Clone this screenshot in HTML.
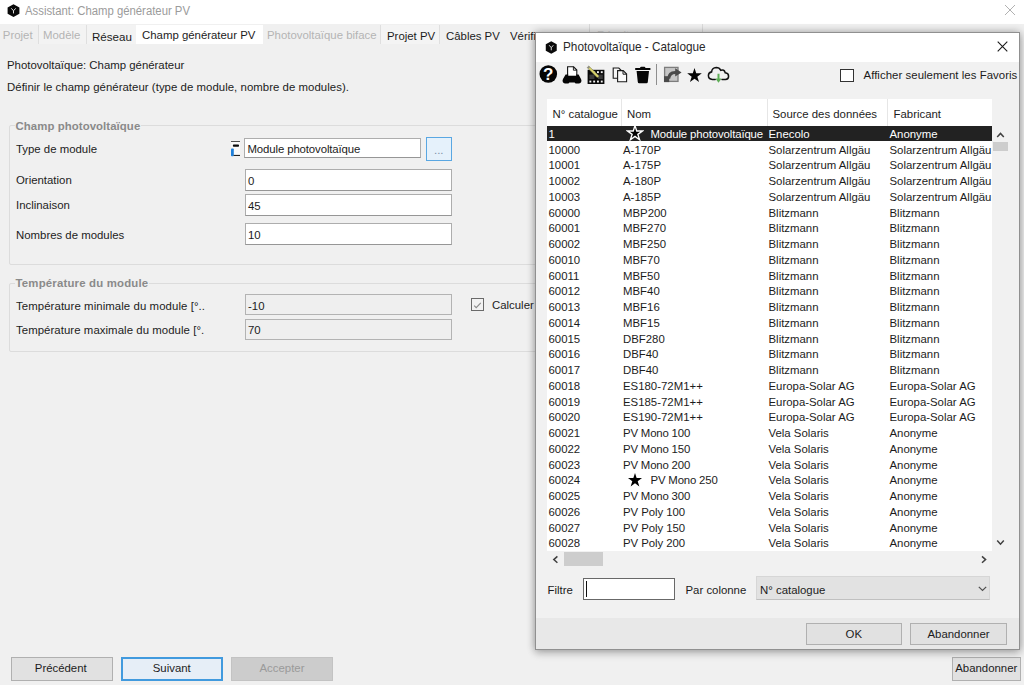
<!DOCTYPE html>
<html lang="fr">
<head>
<meta charset="utf-8">
<title>Assistant: Champ générateur PV</title>
<style>
*{box-sizing:border-box;margin:0;padding:0}
html,body{width:1024px;height:685px;overflow:hidden;background:#f0f0f0}
body{position:relative;font-family:"Liberation Sans",sans-serif;font-size:11.4px;color:#1c1c1c;line-height:14px;white-space:nowrap}
.abs{position:absolute}
.t{position:absolute;white-space:nowrap;line-height:14px;height:14px}
#titlebar{position:absolute;left:0;top:0;width:1024px;height:24.5px;background:#fff}
#tabs{position:absolute;left:0;top:24.4px;width:1024px;height:20px;background:#f0f0f0}
.tab{position:absolute;top:24.5px;height:19.5px;border-left:1px solid #dfdfdf}
.dis{color:#b4b4b4}
.grp{position:absolute;border:1px solid #dcdcdc;border-radius:2px}
.gt{position:absolute;font-weight:bold;color:#8a8a8a;background:#f0f0f0;padding:0 1px;line-height:14px}
.inp{position:absolute;background:#fff;border:1px solid #adadad;border-bottom-color:#969696;font-size:11.4px;line-height:14px;padding-left:2.5px}
.inp.d{background:#efefef;border-color:#b3b3b3}
.btn{position:absolute;background:#e1e1e1;border:1px solid #b0b0b0;text-align:center;line-height:21px;height:23px}
.row{position:absolute;left:547px;width:445px;height:15.75px;line-height:15.75px}
.row span{top:0.75px}
.row.sel{background:#222;color:#fff;height:15.4px}
.rstar{position:absolute}
#dlg{position:absolute;left:535px;top:32px;width:484.5px;height:618px;background:#f1f1f1;border:1px solid #909090;box-shadow:0 0 8px rgba(0,0,0,.32),0 4px 8px rgba(0,0,0,.14)}
</style>
</head>
<body>
<!-- main window -->
<div id="titlebar"></div>
<svg class="abs" style="left:6.5px;top:3.5px" width="13" height="13.2" viewBox="0 0 13 14" preserveAspectRatio="none"><path d="M6.5 0.3 L12.4 3.6 V10.4 L6.5 13.7 L0.6 10.4 V3.6 Z" fill="#0a0a0a"/><path d="M4.3 4.6 L6.5 7.2 L8.7 4.6 M6.5 7.2 V10" stroke="#e8e8e8" stroke-width="1" fill="none"/></svg>
<div class="t" style="left:25px;top:3.8px;font-size:12px;color:#9b9b9b;transform-origin:0 0;transform:scaleX(.944)">Assistant: Champ générateur PV</div>
<svg class="abs" style="left:1004px;top:3.8px" width="12" height="12" viewBox="0 0 12 12"><path d="M1 1 L11 11 M11 1 L1 11" stroke="#a8a8a8" stroke-width="0.9" fill="none"/></svg>

<div id="tabs"></div>
<div class="tab" style="left:38px;width:48px;background:#f3f3f3"></div>
<div class="tab" style="left:85.5px;width:50px;background:#f3f3f3"></div>
<div class="tab" style="left:135.5px;width:127px;background:#fff;border-left:none"></div>
<div class="tab" style="left:380px;width:60px;background:#f4f4f4;border-right:1px solid #dfdfdf"></div>
<div class="t dis" style="left:2.8px;top:28px">Projet</div>
<div class="t dis" style="left:43px;top:28px">Modèle</div>
<div class="t" style="left:92px;top:30px;font-size:11.6px">Réseau</div>
<div class="t" style="left:142px;top:27.5px">Champ générateur PV</div>
<div class="t dis" style="left:267px;top:28px">Photovoltaïque biface</div>
<div class="t" style="left:387px;top:29px">Projet PV</div>
<div class="t" style="left:446px;top:29px">Câbles PV</div>
<div class="t" style="left:510px;top:29px">Vérification</div>
<div class="t dis" style="left:597px;top:28px;color:#d0d0d0">Résultats</div>
<div class="abs" style="left:589px;top:24px;width:1px;height:8px;background:#dadada"></div>
<div class="abs" style="left:702px;top:24px;width:1px;height:8px;background:#dadada"></div>

<div class="t" style="left:7px;top:58px">Photovoltaïque: Champ générateur</div>
<div class="t" style="left:7px;top:79.5px;letter-spacing:0.04px">Définir le champ générateur (type de module, nombre de modules).</div>

<div class="grp" style="left:9px;top:125px;width:1006px;height:140px"></div>
<div class="gt" style="left:14.5px;top:119px;letter-spacing:0.07px">Champ photovoltaïque</div>
<div class="t" style="left:16px;top:142px">Type de module</div>
<div class="t" style="left:16px;top:173px">Orientation</div>
<div class="t" style="left:16px;top:198px">Inclinaison</div>
<div class="t" style="left:16px;top:227.5px">Nombres de modules</div>
<svg class="abs" style="left:230px;top:141px" width="11" height="16" viewBox="0 0 11 16"><rect x="1" y="0.6" width="9" height="14.3" fill="#f9f9f9"/><rect x="1" y="0" width="9" height="1" fill="#505050"/><rect x="2.9" y="3.5" width="6.1" height="2.2" rx="0.8" fill="#0a0a0a"/><rect x="1" y="7.4" width="2.8" height="7.9" rx="0.8" fill="#1f80da"/><rect x="3.6" y="13.9" width="6.4" height="1.1" fill="#222"/></svg>
<div class="inp" style="left:244px;top:138px;width:177px;height:19.5px;padding-top:2.5px;letter-spacing:-0.12px">Module photovoltaïque</div>
<div class="abs" style="left:426px;top:137px;width:25.5px;height:23.5px;background:#e5f1fb;border:1px solid #5aa7e2;text-align:center;line-height:24px;color:#7b8ea6">...</div>
<div class="inp" style="left:244.5px;top:169px;width:207px;height:22px;padding-top:4px">0</div>
<div class="inp" style="left:244.5px;top:194px;width:207px;height:22px;padding-top:4px">45</div>
<div class="inp" style="left:244.5px;top:223px;width:207px;height:22px;padding-top:4px">10</div>

<div class="grp" style="left:9px;top:282.5px;width:1006px;height:69px"></div>
<div class="gt" style="left:14.5px;top:275.5px;letter-spacing:0.19px">Température du module</div>
<div class="t" style="left:16px;top:298.5px;letter-spacing:0.08px">Température minimale du module [°..</div>
<div class="t" style="left:16px;top:322.5px;letter-spacing:0.06px">Température maximale du module [°.</div>
<div class="inp d" style="left:244.5px;top:294px;width:207px;height:21px;padding-top:3.5px">-10</div>
<div class="inp d" style="left:244.5px;top:318.5px;width:207px;height:21.5px;padding-top:3.5px">70</div>
<div class="abs" style="left:471px;top:298px;width:13px;height:13px;background:#f2f2f2;border:1px solid #6a6a6a"></div>
<svg class="abs" style="left:472px;top:299px" width="11" height="11" viewBox="0 0 11 11"><path d="M2.2 6.6 L4.2 8.6 L8.8 3.8" stroke="#8a8a8a" stroke-width="1.1" fill="none"/></svg>
<div class="t" style="left:492px;top:297.5px">Calculer</div>

<div class="btn" style="left:11px;top:657px;width:101.5px;height:23.5px;text-indent:-2px">Précédent</div>
<div class="btn" style="left:121px;top:657px;width:101.5px;height:23.5px;background:#e6eef7;border:2px solid #419ade;line-height:19.5px">Suivant</div>
<div class="btn" style="left:231px;top:657px;width:102px;height:23.5px;background:#cccccc;border-color:#c3c3c3;color:#9a9a9a">Accepter</div>
<div class="btn" style="left:952px;top:657px;width:68.5px;height:23.5px">Abandonner</div>

<!-- dialog -->
<div id="dlg"></div>
<div class="abs" style="left:536px;top:33px;width:482.5px;height:28.5px;background:#fff"></div>
<svg class="abs" style="left:544.5px;top:40.5px" width="12.5" height="13" viewBox="0 0 13 14"><path d="M6.5 0.3 L12.4 3.6 V10.4 L6.5 13.7 L0.6 10.4 V3.6 Z" fill="#0a0a0a"/><path d="M4.3 4.6 L6.5 7.2 L8.7 4.6 M6.5 7.2 V10" stroke="#e8e8e8" stroke-width="1" fill="none"/></svg>
<div class="t" style="left:563px;top:40.3px;font-size:12.4px;color:#2a2a2a;transform-origin:0 0;transform:scaleX(.95)">Photovoltaïque - Catalogue</div>
<svg class="abs" style="left:997px;top:41.2px" width="11" height="11" viewBox="0 0 11 11"><path d="M0.7 0.7 L10.3 10.3 M10.3 0.7 L0.7 10.3" stroke="#1a1a1a" stroke-width="1.1" fill="none"/></svg>

<!-- toolbar icons -->
<svg class="abs" style="left:539px;top:65px" width="19" height="19" viewBox="0 0 19 19"><circle cx="9.3" cy="9" r="8.8" fill="#050505"/><text x="9.3" y="14.9" text-anchor="middle" font-family="Liberation Sans, sans-serif" font-weight="bold" font-size="17" fill="#fff">?</text></svg>
<svg class="abs" style="left:562px;top:65.5px" width="20" height="18" viewBox="0 0 20 18"><path d="M5.6 9.5 V0.8 H11.6 L14.8 4 V9.5" fill="#fff" stroke="#111" stroke-width="1.1"/><path d="M11.4 0.8 V4.2 H14.8" fill="none" stroke="#111" stroke-width="0.9"/><path d="M3.6 8.6 H6.2 V9.8 H14.2 V8.6 H16.6 L19 13 Q19.8 14.6 19.2 16 Q18.6 17.4 17 17.4 H13.6 L12.6 16.4 H7.4 L6.4 17.4 H3 Q1.4 17.4 0.8 16 Q0.2 14.6 1 13 Z" fill="#050505"/></svg>
<svg class="abs" style="left:586px;top:64.5px" width="20" height="20" viewBox="0 0 20 20"><rect x="1.6" y="4.8" width="16.8" height="14.2" fill="#0a0a0a"/><g fill="#f4f4f4"><rect x="7.2" y="6.2" width="1.9" height="1.9"/><rect x="11" y="6.2" width="1.9" height="1.9"/><rect x="14.8" y="6.2" width="1.9" height="1.9"/><rect x="3.4" y="15.6" width="1.9" height="1.9"/><rect x="7.2" y="15.6" width="1.9" height="1.9"/><rect x="11" y="15.6" width="1.9" height="1.9"/><rect x="14.8" y="15.6" width="1.9" height="1.9"/><rect x="3.4" y="9.6" width="5" height="4.4" fill="#3a3a3a"/><rect x="12" y="9.6" width="4.8" height="4.4" fill="#3a3a3a"/></g><path d="M1.2 2.6 L2.8 1 L12.6 10.6 L13 12.8 L10.8 12.3 Z" fill="#d9d36a" stroke="#6b6b4a" stroke-width="0.5"/><path d="M1.2 2.6 L2.8 1 L4 2.2 L2.4 3.8 Z" fill="#8a8a8a"/><path d="M11.9 12.55 L13 12.8 L12.8 11.7 Z" fill="#222"/></svg>
<svg class="abs" style="left:612px;top:66.5px" width="16" height="16" viewBox="0 0 16 16"><path d="M1.2 1 H6.8 L9.6 3.8 V11.2 H1.2 Z" fill="#f6f6f6" stroke="#1a1a1a" stroke-width="1.1"/><path d="M5.6 3.6 H11.2 L14.6 7 V14.8 H5.6 Z" fill="#fafafa" stroke="#1a1a1a" stroke-width="1.1"/><path d="M11 3.8 V7.2 H14.4" fill="none" stroke="#1a1a1a" stroke-width="1"/></svg>
<svg class="abs" style="left:634px;top:65.5px" width="18" height="18" viewBox="0 0 18 18"><path d="M6.6 0.9 H10.8 V2 H6.6 Z M1.2 2 H16.4 V4 H1.2 Z" fill="#050505"/><path d="M6.2 1.9 Q6.2 0.8 7.4 0.8 H10.2 Q11.4 0.8 11.4 1.9 Z" fill="#050505"/><path d="M2.6 5 H15 L13.8 16 Q13.7 17.2 12.5 17.2 H5.1 Q3.9 17.2 3.8 16 Z" fill="#050505"/></svg>
<div class="abs" style="left:656px;top:64px;width:1px;height:20.5px;background:#8e8e8e"></div>
<svg class="abs" style="left:663px;top:65.5px" width="20" height="18" viewBox="0 0 20 18"><rect x="1.6" y="1.4" width="13.4" height="14" fill="#c6c6c6" stroke="#7d7d7d" stroke-width="1.3"/><rect x="1" y="10.2" width="5.2" height="5.9" fill="#4a4a4a"/><path d="M4.2 12.8 Q4.4 5.2 12.2 5 V2.2 L18.6 6.4 L12.2 10.6 V8 Q7.8 8 7.2 12.8 Z" fill="#4a4a4a"/></svg>
<svg class="abs" style="left:687px;top:68px" width="15" height="14" viewBox="0 0 14 13.4"><path d="M7 0 L8.65 5.1 L14 5.1 L9.7 8.3 L11.35 13.4 L7 10.2 L2.65 13.4 L4.3 8.3 L0 5.1 L5.35 5.1 Z" fill="#050505"/></svg>
<svg class="abs" style="left:707px;top:66px" width="23" height="18.5" viewBox="0 0 23 17" preserveAspectRatio="none"><path d="M8.2 12.4 H5.4 Q1.4 12.2 1.4 8.8 Q1.4 6 4.6 5.4 Q5 1.6 9.2 1.4 Q12.4 1.4 13.8 4 Q17.2 2.8 18.2 6.2 Q21.6 6.6 21.6 9.4 Q21.6 12.2 18.4 12.4 H15" fill="none" stroke="#111" stroke-width="1.5" stroke-linecap="round"/><path d="M10.5 7.2 H12.5 V11.4 H14.6 L11.5 15.4 L8.4 11.4 H10.5 Z" fill="#5fae57"/></svg>


<div class="abs" style="left:840px;top:68.5px;width:13.5px;height:13.5px;background:#fff;border:1px solid #333"></div>
<div class="t" style="left:863.5px;top:68px;letter-spacing:0.05px">Afficher seulement les Favoris</div>

<!-- table -->
<div class="abs" style="left:547px;top:99px;width:445px;height:452px;background:#fff"></div>
<div class="abs" style="left:621px;top:99px;width:1px;height:27px;background:#e6e6e6"></div>
<div class="abs" style="left:766.5px;top:99px;width:1px;height:27px;background:#e6e6e6"></div>
<div class="abs" style="left:886.5px;top:99px;width:1px;height:27px;background:#e6e6e6"></div>
<div class="t" style="left:552.5px;top:107px">N° catalogue</div>
<div class="t" style="left:627px;top:107px">Nom</div>
<div class="t" style="left:772.5px;top:107px">Source des données</div>
<div class="t" style="left:893.5px;top:107px">Fabricant</div>
<div class="row sel" style="top:126.10px"><span style="position:absolute;left:1.5px">1</span><svg class="rstar" viewBox="-1.5 -1.5 17 17" width="18" height="18" style="left:79px;top:-2px"><path d="M7 0 L8.65 5.1 L14 5.1 L9.7 8.3 L11.35 13.4 L7 10.2 L2.65 13.4 L4.3 8.3 L0 5.1 L5.35 5.1 Z" fill="#000" stroke="#fff" stroke-width="1.3"/></svg><span style="position:absolute;left:103.5px;letter-spacing:-0.13px">Module photovoltaïque</span><span style="position:absolute;left:221.5px">Enecolo</span><span style="position:absolute;left:342.5px">Anonyme</span></div>
<div class="row" style="top:141.85px"><span style="position:absolute;left:1.5px">10000</span><span style="position:absolute;left:76px">A-170P</span><span style="position:absolute;left:221.5px">Solarzentrum Allgäu</span><span style="position:absolute;left:342.5px">Solarzentrum Allgäu</span></div>
<div class="row" style="top:157.60px"><span style="position:absolute;left:1.5px">10001</span><span style="position:absolute;left:76px">A-175P</span><span style="position:absolute;left:221.5px">Solarzentrum Allgäu</span><span style="position:absolute;left:342.5px">Solarzentrum Allgäu</span></div>
<div class="row" style="top:173.35px"><span style="position:absolute;left:1.5px">10002</span><span style="position:absolute;left:76px">A-180P</span><span style="position:absolute;left:221.5px">Solarzentrum Allgäu</span><span style="position:absolute;left:342.5px">Solarzentrum Allgäu</span></div>
<div class="row" style="top:189.10px"><span style="position:absolute;left:1.5px">10003</span><span style="position:absolute;left:76px">A-185P</span><span style="position:absolute;left:221.5px">Solarzentrum Allgäu</span><span style="position:absolute;left:342.5px">Solarzentrum Allgäu</span></div>
<div class="row" style="top:204.85px"><span style="position:absolute;left:1.5px">60000</span><span style="position:absolute;left:76px">MBP200</span><span style="position:absolute;left:221.5px">Blitzmann</span><span style="position:absolute;left:342.5px">Blitzmann</span></div>
<div class="row" style="top:220.60px"><span style="position:absolute;left:1.5px">60001</span><span style="position:absolute;left:76px">MBF270</span><span style="position:absolute;left:221.5px">Blitzmann</span><span style="position:absolute;left:342.5px">Blitzmann</span></div>
<div class="row" style="top:236.35px"><span style="position:absolute;left:1.5px">60002</span><span style="position:absolute;left:76px">MBF250</span><span style="position:absolute;left:221.5px">Blitzmann</span><span style="position:absolute;left:342.5px">Blitzmann</span></div>
<div class="row" style="top:252.10px"><span style="position:absolute;left:1.5px">60010</span><span style="position:absolute;left:76px">MBF70</span><span style="position:absolute;left:221.5px">Blitzmann</span><span style="position:absolute;left:342.5px">Blitzmann</span></div>
<div class="row" style="top:267.85px"><span style="position:absolute;left:1.5px">60011</span><span style="position:absolute;left:76px">MBF50</span><span style="position:absolute;left:221.5px">Blitzmann</span><span style="position:absolute;left:342.5px">Blitzmann</span></div>
<div class="row" style="top:283.60px"><span style="position:absolute;left:1.5px">60012</span><span style="position:absolute;left:76px">MBF40</span><span style="position:absolute;left:221.5px">Blitzmann</span><span style="position:absolute;left:342.5px">Blitzmann</span></div>
<div class="row" style="top:299.35px"><span style="position:absolute;left:1.5px">60013</span><span style="position:absolute;left:76px">MBF16</span><span style="position:absolute;left:221.5px">Blitzmann</span><span style="position:absolute;left:342.5px">Blitzmann</span></div>
<div class="row" style="top:315.10px"><span style="position:absolute;left:1.5px">60014</span><span style="position:absolute;left:76px">MBF15</span><span style="position:absolute;left:221.5px">Blitzmann</span><span style="position:absolute;left:342.5px">Blitzmann</span></div>
<div class="row" style="top:330.85px"><span style="position:absolute;left:1.5px">60015</span><span style="position:absolute;left:76px">DBF280</span><span style="position:absolute;left:221.5px">Blitzmann</span><span style="position:absolute;left:342.5px">Blitzmann</span></div>
<div class="row" style="top:346.60px"><span style="position:absolute;left:1.5px">60016</span><span style="position:absolute;left:76px">DBF40</span><span style="position:absolute;left:221.5px">Blitzmann</span><span style="position:absolute;left:342.5px">Blitzmann</span></div>
<div class="row" style="top:362.35px"><span style="position:absolute;left:1.5px">60017</span><span style="position:absolute;left:76px">DBF40</span><span style="position:absolute;left:221.5px">Blitzmann</span><span style="position:absolute;left:342.5px">Blitzmann</span></div>
<div class="row" style="top:378.10px"><span style="position:absolute;left:1.5px">60018</span><span style="position:absolute;left:76px">ES180-72M1++</span><span style="position:absolute;left:221.5px">Europa-Solar AG</span><span style="position:absolute;left:342.5px">Europa-Solar AG</span></div>
<div class="row" style="top:393.85px"><span style="position:absolute;left:1.5px">60019</span><span style="position:absolute;left:76px">ES185-72M1++</span><span style="position:absolute;left:221.5px">Europa-Solar AG</span><span style="position:absolute;left:342.5px">Europa-Solar AG</span></div>
<div class="row" style="top:409.60px"><span style="position:absolute;left:1.5px">60020</span><span style="position:absolute;left:76px">ES190-72M1++</span><span style="position:absolute;left:221.5px">Europa-Solar AG</span><span style="position:absolute;left:342.5px">Europa-Solar AG</span></div>
<div class="row" style="top:425.35px"><span style="position:absolute;left:1.5px">60021</span><span style="position:absolute;left:76px;letter-spacing:-0.18px">PV Mono 100</span><span style="position:absolute;left:221.5px">Vela Solaris</span><span style="position:absolute;left:342.5px">Anonyme</span></div>
<div class="row" style="top:441.10px"><span style="position:absolute;left:1.5px">60022</span><span style="position:absolute;left:76px;letter-spacing:-0.18px">PV Mono 150</span><span style="position:absolute;left:221.5px">Vela Solaris</span><span style="position:absolute;left:342.5px">Anonyme</span></div>
<div class="row" style="top:456.85px"><span style="position:absolute;left:1.5px">60023</span><span style="position:absolute;left:76px;letter-spacing:-0.18px">PV Mono 200</span><span style="position:absolute;left:221.5px">Vela Solaris</span><span style="position:absolute;left:342.5px">Anonyme</span></div>
<div class="row" style="top:472.60px"><span style="position:absolute;left:1.5px">60024</span><svg class="rstar" viewBox="0 0 14 14" width="14" height="14" style="left:80.5px;top:0px"><path d="M7 0 L8.65 5.1 L14 5.1 L9.7 8.3 L11.35 13.4 L7 10.2 L2.65 13.4 L4.3 8.3 L0 5.1 L5.35 5.1 Z" fill="#000"/></svg><span style="position:absolute;left:103.5px;letter-spacing:-0.18px">PV Mono 250</span><span style="position:absolute;left:221.5px">Vela Solaris</span><span style="position:absolute;left:342.5px">Anonyme</span></div>
<div class="row" style="top:488.35px"><span style="position:absolute;left:1.5px">60025</span><span style="position:absolute;left:76px;letter-spacing:-0.18px">PV Mono 300</span><span style="position:absolute;left:221.5px">Vela Solaris</span><span style="position:absolute;left:342.5px">Anonyme</span></div>
<div class="row" style="top:504.10px"><span style="position:absolute;left:1.5px">60026</span><span style="position:absolute;left:76px;letter-spacing:-0.05px">PV Poly 100</span><span style="position:absolute;left:221.5px">Vela Solaris</span><span style="position:absolute;left:342.5px">Anonyme</span></div>
<div class="row" style="top:519.85px"><span style="position:absolute;left:1.5px">60027</span><span style="position:absolute;left:76px;letter-spacing:-0.05px">PV Poly 150</span><span style="position:absolute;left:221.5px">Vela Solaris</span><span style="position:absolute;left:342.5px">Anonyme</span></div>
<div class="row" style="top:535.60px"><span style="position:absolute;left:1.5px">60028</span><span style="position:absolute;left:76px;letter-spacing:-0.05px">PV Poly 200</span><span style="position:absolute;left:221.5px">Vela Solaris</span><span style="position:absolute;left:342.5px">Anonyme</span></div>

<svg class="abs" style="left:996px;top:130.5px" width="9" height="8" viewBox="0 0 9 8"><path d="M1.2 6 L4.5 2.4 L7.8 6" stroke="#404040" stroke-width="1.5" fill="none"/></svg>
<div class="abs" style="left:992.5px;top:142px;width:15px;height:8.5px;background:#cdcdcd"></div>
<svg class="abs" style="left:996px;top:539px" width="9" height="8" viewBox="0 0 9 8"><path d="M1.2 1.6 L4.5 5.2 L7.8 1.6" stroke="#404040" stroke-width="1.5" fill="none"/></svg>
<svg class="abs" style="left:551.5px;top:554.5px" width="8" height="9" viewBox="0 0 8 9"><path d="M5.4 1.4 L1.8 4.6 L5.4 7.8" stroke="#404040" stroke-width="1.5" fill="none"/></svg>
<div class="abs" style="left:564px;top:551.5px;width:39px;height:14.5px;background:#cdcdcd"></div>
<svg class="abs" style="left:979.5px;top:554.5px" width="8" height="9" viewBox="0 0 8 9"><path d="M2 1.4 L5.6 4.6 L2 7.8" stroke="#404040" stroke-width="1.5" fill="none"/></svg>

<div class="t" style="left:547.5px;top:583px">Filtre</div>
<div class="abs" style="left:583px;top:578px;width:91.5px;height:21.5px;background:#fff;border:1px solid #686868"></div>
<div class="abs" style="left:586px;top:580.5px;width:1px;height:16px;background:#111"></div>
<div class="t" style="left:685.5px;top:583px">Par colonne</div>
<div class="abs" style="left:755.5px;top:576.2px;width:234.5px;height:23.5px;background:#e2e2e2;border:1px solid #d6d6d6;border-bottom-color:#c0c0c0"></div>
<div class="t" style="left:760px;top:583px">N° catalogue</div>
<svg class="abs" style="left:977.5px;top:585.5px" width="9" height="6" viewBox="0 0 9 6"><path d="M0.8 0.8 L4.5 4.5 L8.2 0.8" stroke="#505050" stroke-width="1.2" fill="none"/></svg>
<div class="abs" style="left:536px;top:617.5px;width:482.5px;height:31.5px;background:#e8e8e8"></div>
<div class="btn" style="left:805.5px;top:622.5px;width:96.5px;height:22.5px">OK</div>
<div class="btn" style="left:910px;top:622.5px;width:97px;height:22.5px">Abandonner</div>
</body>
</html>
